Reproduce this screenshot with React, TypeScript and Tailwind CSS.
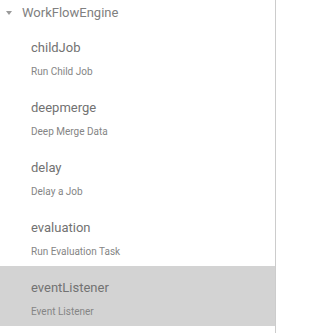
const items = [
  { name: "childJob", desc: "Run Child Job" },
  { name: "deepmerge", desc: "Deep Merge Data" },
  { name: "delay", desc: "Delay a Job" },
  { name: "evaluation", desc: "Run Evaluation Task" },
  { name: "eventListener", desc: "Event Listener", active: true },
]

export default function App() {
  return (
    <div className="h-[333px] w-[277px] overflow-hidden bg-white font-['Roboto',sans-serif]">
      <div className="h-full w-[276px] border-r border-[#cccccc]">
        <div className="flex h-[26px] items-center pl-[6px] text-[13px] text-[#808080]">
          <svg width="6" height="4" viewBox="0 0 6 4" className="mr-[10px]">
            <path d="M0 0h6L3 4z" fill="#9a9a9a" />
          </svg>
          WorkFlowEngine
        </div>

        {items.map((item) => (
          <div
            key={item.name}
            className={`flex h-[60px] flex-col pl-[31px] ${item.active ? "bg-[#d3d3d3]" : ""}`}
          >
            <p className="mt-[13px] text-[13px] leading-[18px] text-[#727272]">
              {item.name}
            </p>
            <p className="mt-[9px] text-[10px] leading-[12px] text-[#858585]">
              {item.desc}
            </p>
          </div>
        ))}
      </div>
    </div>
  )
}
